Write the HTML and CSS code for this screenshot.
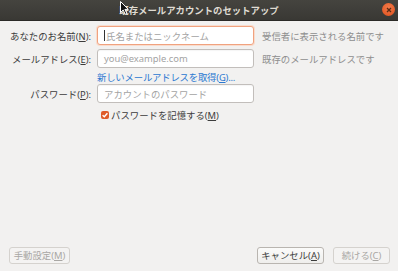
FILE: index.html
```html
<!DOCTYPE html>
<html lang="ja">
<head>
    <meta charset="UTF-8">
    <title>既存メールアカウントのセットアップ</title>
    <link rel="stylesheet" href="styles.css">
</head>
<body>

<div class="window">
    <div class="titlebar">
        <span class="title">既存メールアカウントのセットアップ</span>
        <span class="close-btn">
            <svg width="6" height="6" viewBox="0 0 6 6"><path d="M1 1L5 5M5 1L1 5" stroke="#5a2a14" stroke-width="1.3"/></svg>
        </span>
        <!-- mouse pointer over the title -->
        <svg class="pointer" width="9" height="14" viewBox="0 0 9 14">
            <path d="M0.5 0.5V11.5L3.2 9L5.2 13.3L6.9 12.5L4.9 8.4H8.3Z" fill="#111" stroke="#fff" stroke-width="1"/>
        </svg>
    </div>

    <div class="form">
        <div class="row">
            <label>あなたのお名前(<u>N</u>):</label>
            <div class="field focused"><span class="caret"></span><span class="ph">氏名またはニックネーム</span></div>
            <span class="hint">受信者に表示される名前です</span>
        </div>

        <div class="row">
            <label>メールアドレス(<u>E</u>):</label>
            <div class="field"><span class="ph">you@example.com</span></div>
            <span class="hint">既存のメールアドレスです</span>
        </div>

        <div class="row link-row">
            <span></span>
            <a class="link">新しいメールアドレスを取得(<u>G</u>)...</a>
        </div>

        <div class="row">
            <label>パスワード(<u>P</u>):</label>
            <div class="field"><span class="ph">アカウントのパスワード</span></div>
        </div>

        <div class="row check-row">
            <span></span>
            <div class="check">
                <span class="box">
                    <svg width="8" height="8" viewBox="0 0 8 8"><path d="M1.6 4.2L3.3 5.8L6.4 2.2" fill="none" stroke="#fff" stroke-width="1.4"/></svg>
                </span>
                <span>パスワードを記憶する(<u>M</u>)</span>
            </div>
        </div>
    </div>

    <div class="footer">
        <button class="btn btn-manual" disabled><span>手動設定(<u>M</u>)</span></button>
        <div class="spacer"></div>
        <button class="btn btn-cancel"><span>キャンセル(<u>A</u>)</span></button>
        <button class="btn btn-next" disabled><span>続ける(<u>C</u>)</span></button>
    </div>
</div>

</body>
</html>
```

FILE: styles.css
```css
body {
    margin: 0;
    font-family: "Noto Sans", "Noto Sans CJK JP", sans-serif;
    font-size: 9.4px;
    background-color: #f2f1f0;
}

.window {
    width: 398px;
    height: 271px;
    display: flex;
    flex-direction: column;
}

/* Title bar */
.titlebar {
    position: relative;
    height: 20px;
    background: linear-gradient(#45443f, #393834);
    display: flex;
    align-items: center;
    justify-content: center;
    border-bottom: 1px solid #2b2a27;
}

.title {
    color: #dfdbd2;
    font-weight: bold;
}

.close-btn {
    position: absolute;
    right: 3px;
    top: 3px;
    width: 13px;
    height: 13px;
    border-radius: 50%;
    background: radial-gradient(circle at 50% 35%, #f47b4a, #dd4f1c);
    display: flex;
    align-items: center;
    justify-content: center;
}

.pointer {
    position: absolute;
    left: 120px;
    top: 1px;
}

/* Form */
.form {
    flex: 1;
    padding-top: 5px;
    display: flex;
    flex-direction: column;
    gap: 4px;
}

.row {
    display: grid;
    grid-template-columns: 91px 157px auto;
    column-gap: 6px;
    align-items: center;
}

label {
    text-align: right;
    color: #3c3c3c;
}

u {
    text-decoration: underline;
    text-underline-offset: 1px;
}

.field {
    height: 17px;
    border: 1px solid #c2bebb;
    border-radius: 3px;
    background-color: #fff;
    display: flex;
    align-items: center;
    padding-left: 6px;
    box-shadow: inset 0 1px 1px rgba(0, 0, 0, 0.04);
}

.field.focused {
    border-color: #f0a27f;
    box-shadow: 0 0 0 1px #f9dccd;
}

.caret {
    width: 1px;
    height: 11px;
    background-color: #333;
    margin-right: 1px;
}

.ph {
    color: #a3a3a3;
}

.hint {
    color: #8e8e8e;
    margin-left: 2px;
}

.link-row {
    height: 10px;
    margin-top: -2px;
}

.link {
    color: #2a78d0;
    letter-spacing: -0.2px;
}

.check-row {
    margin-top: 1px;
}

.check {
    display: flex;
    align-items: center;
    color: #3c3c3c;
    padding-left: 4px;
}

.box {
    width: 8px;
    height: 8px;
    border-radius: 2px;
    background-color: #df5b29;
    display: flex;
    margin-right: 2px;
}

/* Bottom buttons */
.footer {
    display: flex;
    align-items: center;
    padding: 0 8px 7px 9px;
    gap: 9px;
}

.spacer {
    flex: 1;
}

.btn {
    font-family: inherit;
    font-size: 9.4px;
    height: 17px;
    padding: 0;
    border: 1px solid #b9b5b0;
    border-radius: 3px;
    background: linear-gradient(#fbfbfa, #efeeec);
    color: #3c3c3c;
    text-align: center;
    white-space: nowrap;
    line-height: 15px;
}

.btn:disabled {
    color: #a9a7a4;
    border-color: #d5d2ce;
    background: #f4f3f2;
}

.btn-manual {
    width: 61px;
}

.btn-cancel {
    width: 67px;
}

.btn-next {
    width: 57px;
}
```
